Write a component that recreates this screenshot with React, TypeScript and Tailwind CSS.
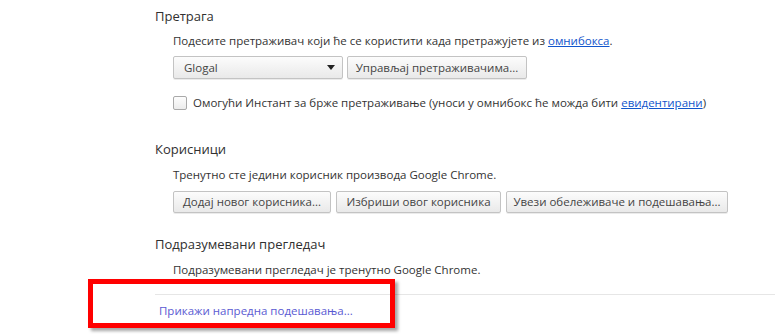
import React from "react";

const btn =
  "h-[22px] rounded-[2px] border border-[#c3c3c3] bg-gradient-to-b from-[#fcfcfc] to-[#e9e9e9] text-[11.5px] text-[#444] shadow-[0_1px_0_rgba(0,0,0,0.08)] flex items-center justify-center";

function Section({ title, children, className = "" }: { title: string; children: React.ReactNode; className?: string }) {
  return (
    <section className={className}>
      <h3 className="text-[13px] leading-[20px] text-[#303030]">{title}</h3>
      <div className="pl-[18px]">{children}</div>
    </section>
  );
}

export default function App() {
  return (
    <div className="relative h-[334px] w-[775px] overflow-hidden bg-white font-['Open_Sans',sans-serif] text-[11.5px] text-[#333]">
      <div className="pl-[155px] pt-[6px]">
        <Section title="Претрага">
          <p className="mt-[7px] leading-[16px]">
            Подесите претраживач који ће се користити када претражујете из{" "}
            <a className="text-[#1155cc] underline">омнибокса</a>.
          </p>
          <div className="mt-[7px] flex gap-[4px]">
            <div className={btn + " w-[170px] !justify-between pl-[10px] pr-[7px] !h-[23px]"}>
              <span>Glogal</span>
              <svg width="8" height="5" viewBox="0 0 8 5">
                <path d="M0 0h8L4 5z" fill="#222" />
              </svg>
            </div>
            <div className={btn + " w-[180px] !h-[23px]"}>Управљај претраживачима...</div>
          </div>
          <div className="mt-[16px] flex items-center gap-[6px] leading-[16px]">
            <span className="h-[14px] w-[14px] rounded-[2px] border border-[#a9a9a9] bg-gradient-to-b from-[#fdfdfd] to-[#ececec]" />
            <span>
              Омогући Инстант за брже претраживање (уноси у омнибокс ће можда бити{" "}
              <a className="text-[#1155cc] underline">евидентирани</a>)
            </span>
          </div>
        </Section>

        <Section title="Корисници" className="mt-[28px]">
          <p className="mt-[8px] leading-[16px]">Тренутно сте једини корисник производа Google Chrome.</p>
          <div className="mt-[8px] flex gap-[5px]">
            <div className={btn + " w-[158px]"}>Додај новог корисника...</div>
            <div className={btn + " w-[165px]"}>Избриши овог корисника</div>
            <div className={btn + " w-[222px]"}>Увези обележиваче и подешавања...</div>
          </div>
        </Section>

        <Section title="Подразумевани прегледач" className="mt-[21px]">
          <p className="mt-[8px] leading-[16px]">Подразумевани прегледач је тренутно Google Chrome.</p>
        </Section>

        <div className="mt-[16px] h-px bg-[#e6e6e6]" />
        <a className="mt-[8px] block pl-[4px] leading-[16px] text-[#5a5ad2]">Прикажи напредна подешавања...</a>
      </div>

      <div className="absolute left-[88px] top-[279px] h-[49px] w-[307px] border-[5px] border-[#ff0000] shadow-[3px_3px_3px_rgba(0,0,0,0.35)]" />
    </div>
  );
}
